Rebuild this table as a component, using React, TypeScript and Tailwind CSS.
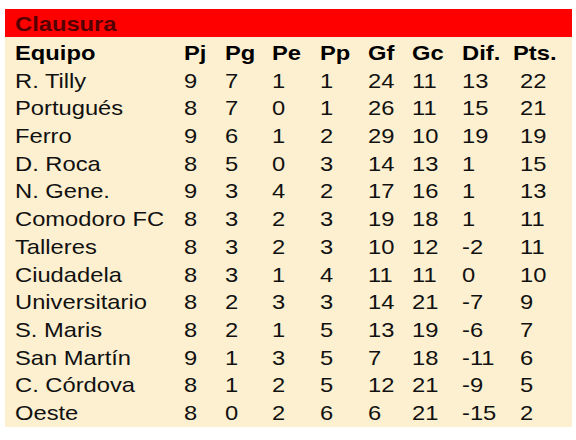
import React from "react";

const rows: (string | number)[][] = [
  ["R. Tilly", 9, 7, 1, 1, 24, 11, 13, 22],
  ["Portugués", 8, 7, 0, 1, 26, 11, 15, 21],
  ["Ferro", 9, 6, 1, 2, 29, 10, 19, 19],
  ["D. Roca", 8, 5, 0, 3, 14, 13, 1, 15],
  ["N. Gene.", 9, 3, 4, 2, 17, 16, 1, 13],
  ["Comodoro FC", 8, 3, 2, 3, 19, 18, 1, 11],
  ["Talleres", 8, 3, 2, 3, 10, 12, -2, 11],
  ["Ciudadela", 8, 3, 1, 4, 11, 11, 0, 10],
  ["Universitario", 8, 2, 3, 3, 14, 21, -7, 9],
  ["S. Maris", 8, 2, 1, 5, 13, 19, -6, 7],
  ["San Martín", 9, 1, 3, 5, 7, 18, -11, 6],
  ["C. Córdova", 8, 1, 2, 5, 12, 21, -9, 5],
  ["Oeste", 8, 0, 2, 6, 6, 21, -15, 2],
];

const headers = ["Equipo", "Pj", "Pg", "Pe", "Pp", "Gf", "Gc", "Dif.", "Pts."];

const gridCols =
  "grid grid-cols-[169px_41px_47px_48px_48px_44px_50px_58px_52px] h-[27.7px] leading-[27.7px] pl-[10px]";

function T({ children, className = "" }: { children: React.ReactNode; className?: string }) {
  return (
    <span className={"inline-block origin-left scale-x-[1.13] whitespace-nowrap " + className}>
      {children}
    </span>
  );
}

export default function App() {
  return (
    <div className="w-[576px] h-[440px] bg-white pt-[9px] pl-[5px] font-['Liberation_Sans',Arial,sans-serif] text-[21px]">
      <div className="w-[567px]">
        <div className="h-[28px] bg-[#ff0000] pl-[10px] leading-[29px] font-bold text-[#550000]">
          <T>Clausura</T>
        </div>
        <div className="bg-[#fcf0d0] pt-[2px] pb-[0px] text-[#111111]">
          <div className={gridCols + " font-bold text-black"}>
            {headers.map((h, i) => (
              <div key={h} className={i === 8 ? "-ml-[7px]" : ""}>
                <T>{h}</T>
              </div>
            ))}
          </div>
          {rows.map((r) => (
            <div key={r[0] as string} className={gridCols}>
              {r.map((c, i) => (
                <div key={i}>
                  <T>{c}</T>
                </div>
              ))}
            </div>
          ))}
        </div>
      </div>
    </div>
  );
}
